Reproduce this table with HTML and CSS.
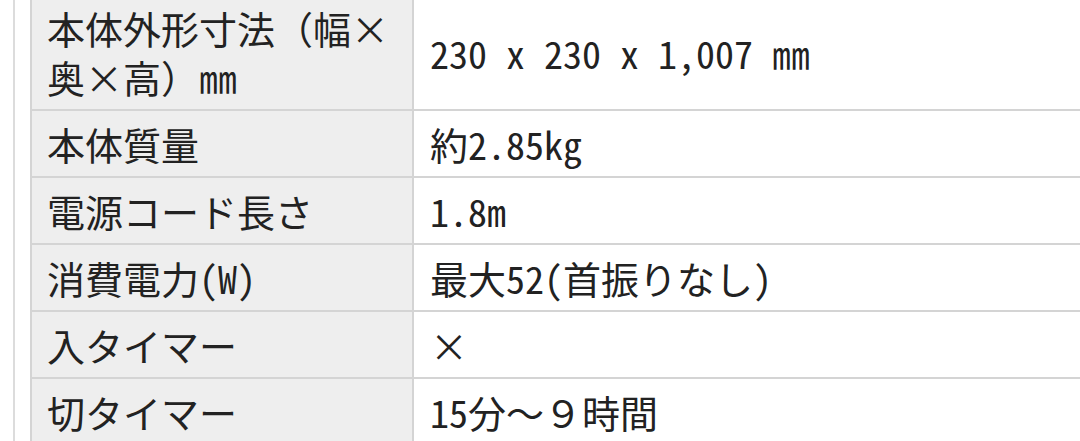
FILE: index.html
```html
<!DOCTYPE html>
<html lang="ja">
<head>
<meta charset="utf-8">
<link rel="stylesheet" href="styles.css">
</head>
<body>
<div class="page">
  <div class="frame">
    <table class="spec">
      <tr><th>本体外形寸法（幅×奥×高）㎜</th><td>230 x 230 x 1,007 ㎜</td></tr>
      <tr><th>本体質量</th><td>約2.85kg</td></tr>
      <tr><th>電源コード長さ</th><td>1.8m</td></tr>
      <tr><th>消費電力(W)</th><td>最大52(首振りなし)</td></tr>
      <tr><th>入タイマー</th><td>×</td></tr>
      <tr><th>切タイマー</th><td>15分～９時間</td></tr>
    </table>
  </div>
</div>
</body>
</html>
```
FILE: styles.css
```css
html, body {
  margin: 0;
  padding: 0;
  background: #ffffff;
  overflow: hidden;
}
.page {
  padding-left: 13px;
}
.frame {
  border-left: 2px solid #dcdcdc;
  padding-left: 15px;
  margin-top: -7px;
}
.spec {
  border-collapse: collapse;
  width: 1100px;
  font-family: "Noto Sans Mono CJK JP", "Noto Sans CJK JP", sans-serif;
  font-size: 38px;
  line-height: 49px;
  color: #222222;
}
.spec th,
.spec td {
  border: 2px solid #d4d4d4;
  padding: 8px 15px 8px 15px;
  text-align: left;
  font-weight: normal;
  vertical-align: middle;
}
.spec th {
  width: 350px;
  background: #eeeeee;
}
.spec td {
  padding-left: 16px;
  background: #ffffff;
}
```
